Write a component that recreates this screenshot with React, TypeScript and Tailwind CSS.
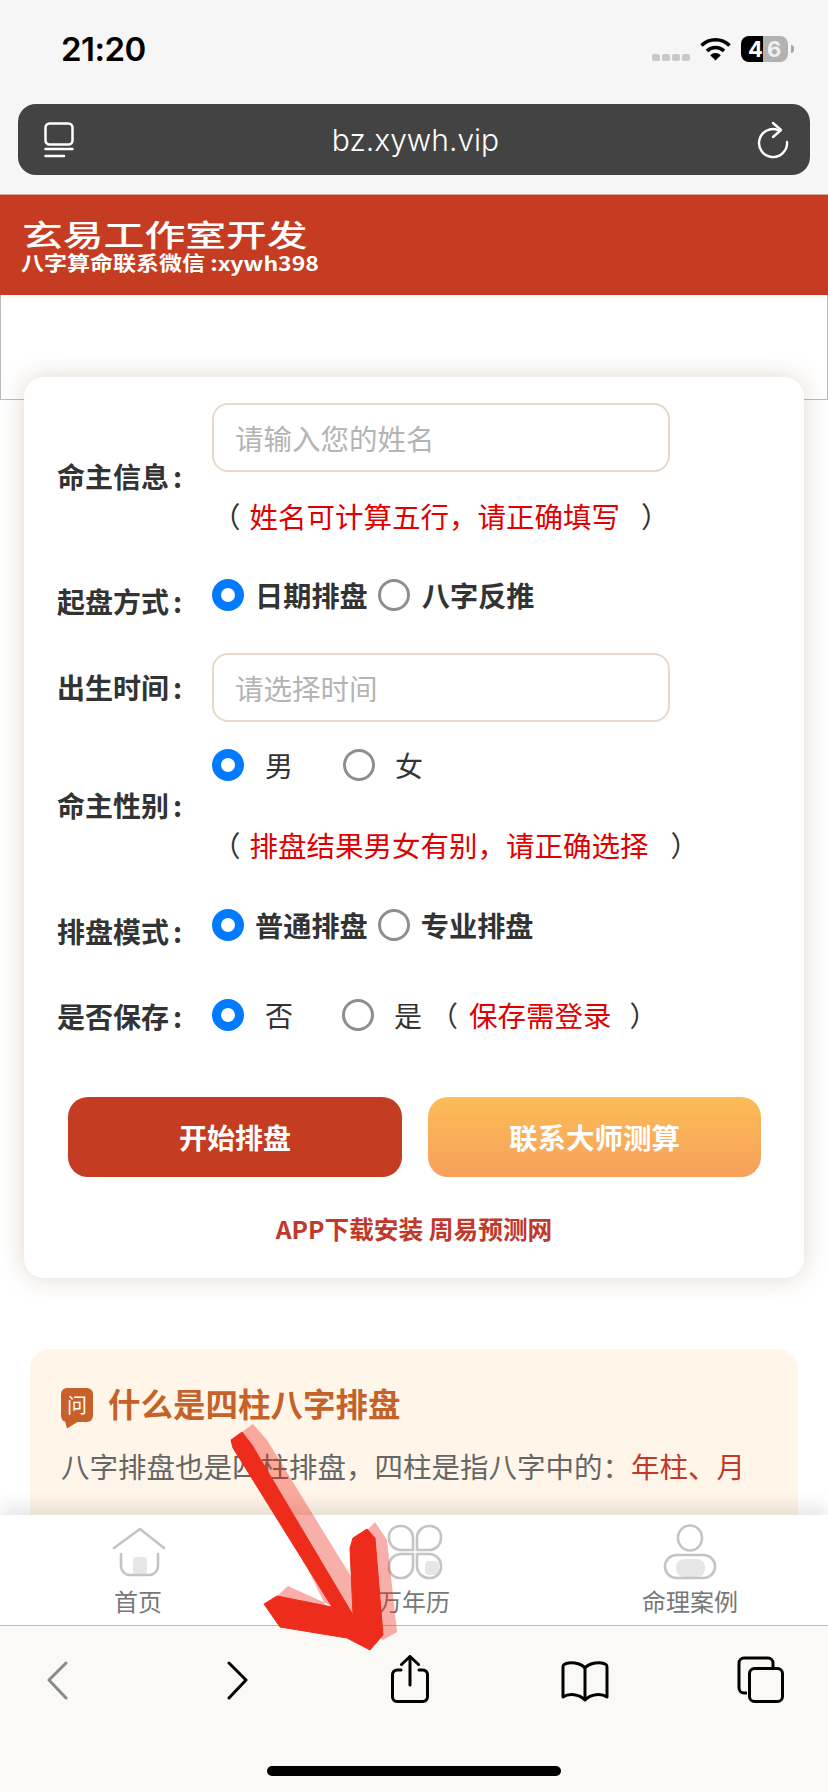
import type { ReactNode } from 'react';

const OPEN = '\uFF08';
const CLOSE = '\uFF09';
const COMMA = '\uFF0C';
const COLON = '\uFF1A';

function Radio({ checked = false }: { checked?: boolean }) {
    return checked ? (
        <span className="block w-[32px] h-[32px] shrink-0 rounded-full border-[9px] border-[#007aff] bg-white" />
    ) : (
        <span className="block w-[32px] h-[32px] shrink-0 rounded-full border-[3px] border-[#8e8e8e] bg-white" />
    );
}

function Label({ children }: { children: ReactNode }) {
    return (
        <div className="w-[155px] shrink-0 -mt-[2px] text-[28px] leading-[36px] font-bold text-[#333] whitespace-nowrap">
            {children}
            <span className="ml-[4px]">:</span>
        </div>
    );
}

function Note({ text, gap }: { text: string; gap: string }) {
    return (
        <div className="flex text-[28.5px] leading-[36px] text-[#333]">
            <span>{OPEN}</span>
            <span className="ml-[9px] text-[#e00000]">{text}</span>
            <span className={gap}>{CLOSE}</span>
        </div>
    );
}

function TextInput({ placeholder }: { placeholder: string }) {
    return (
        <input
            readOnly
            placeholder={placeholder}
            className="block w-[458px] h-[69px] px-[21px] rounded-[16px] border-2 border-[#e8d8c8] bg-white text-[28.5px] outline-none placeholder:text-[#b4b4b4]"
        />
    );
}

export default function App() {
    return (
        <div className="relative flex flex-col w-[828px] h-[1792px] overflow-hidden bg-white font-['Noto_Sans_CJK_SC','Noto_Sans',sans-serif]">
            {/* Status bar and address bar */}
            <div className="shrink-0 h-[195px] bg-[#f6f6f6] border-b border-[#d8a89c]">
                <div className="flex justify-between h-[104px] pl-[61px] pr-[34px] pt-[29px]">
                    <div className="font-['Inter',sans-serif] text-[33px] leading-[40px] font-semibold text-black tracking-[-0.5px]">21:20</div>
                    <div className="flex items-start pt-[7px]">
                        <div className="flex gap-[2px] mt-[18px]">
                            <span className="w-[8px] h-[7px] rounded-[2px] bg-[#c9c9c9]" />
                            <span className="w-[8px] h-[7px] rounded-[2px] bg-[#c9c9c9]" />
                            <span className="w-[8px] h-[7px] rounded-[2px] bg-[#c9c9c9]" />
                            <span className="w-[8px] h-[7px] rounded-[2px] bg-[#c9c9c9]" />
                        </div>
                        <svg className="ml-[10px] mt-[1px]" width="31" height="24" viewBox="0 0 31 24" fill="none" stroke="#000" strokeWidth="3.6">
                            <path d="M1.5 8.5A20 20 0 0 1 29.5 8.5" />
                            <path d="M7 14A12 12 0 0 1 24 14" />
                            <path d="M15.5 23.5L10.2 18.2A7.5 7.5 0 0 1 20.8 18.2Z" fill="#000" stroke="none" />
                        </svg>
                        <div className="flex ml-[10px] w-[47px] h-[26px] font-['Inter',sans-serif] text-[22px] leading-[26px] font-bold">
                            <span className="w-[22px] rounded-l-[8px] bg-black text-white text-right">4</span>
                            <span className="w-[25px] pl-[4px] rounded-r-[8px] bg-[#b2b2b2] text-[#f0f0f0]">6</span>
                        </div>
                        <span className="ml-[3px] mt-[9px] w-[3px] h-[8px] rounded-r-[3px] bg-[#a8a8a8]" />
                    </div>
                </div>
                <div className="flex items-center justify-between mx-[18px] h-[71px] pl-[26px] pr-[19px] rounded-[18px] bg-[#434343]">
                    <svg width="30" height="36" viewBox="0 0 30 36" fill="none" stroke="#fff" strokeWidth="2.5" strokeLinecap="round">
                        <rect x="1.5" y="1.5" width="27" height="21" rx="4" />
                        <path d="M1.5 27H28.5" />
                        <path d="M1.5 34H20" />
                    </svg>
                    <div className="font-['Inter',sans-serif] text-[30px] leading-[40px] text-white font-light">bz.xywh.vip</div>
                    <svg width="34" height="40" viewBox="0 0 34 40" fill="none" stroke="#fff" strokeWidth="2.4" strokeLinecap="round" strokeLinejoin="round">
                        <path d="M21 10A14 14 0 1 0 30 22" />
                        <path d="M16 3L24 10L16 17" />
                    </svg>
                </div>
            </div>

            {/* Page content */}
            <div className="flex-1 min-h-0 overflow-hidden">
                <div className="flex flex-col justify-center h-[100px] pl-[22px] bg-[#c53c22] text-white">
                    <div className="origin-left scale-x-[1.36] text-[30px] leading-[30px] font-medium whitespace-nowrap">玄易工作室开发</div>
                    <div className="origin-left scale-x-[1.15] mt-[5px] -ml-[1px] text-[20px] leading-[20px] font-bold whitespace-nowrap">八字算命联系微信 :xywh398</div>
                </div>
                <div className="h-[105px] border border-t-0 border-[#bbb] shadow-[inset_0_8px_12px_-8px_rgba(0,0,0,0.06)]" />

                {/* Form card */}
                <div className="relative mx-[24px] -mt-[23px] pt-[26px] pb-[32px] pl-[33px] rounded-[20px] bg-white shadow-[0_0_24px_rgba(150,110,80,0.28)]">
                    <div className="flex items-center h-[148px]">
                        <Label>命主信息</Label>
                        <div className="self-start">
                            <TextInput placeholder="请输入您的姓名" />
                            <div className="mt-[26px]">
                                <Note text={`姓名可计算五行${COMMA}请正确填写`} gap="ml-[21px]" />
                            </div>
                        </div>
                    </div>

                    <div className="flex items-center h-[46px] mt-[28px]">
                        <Label>起盘方式</Label>
                        <div className="self-start flex items-center text-[28.2px] leading-[32px] font-bold text-[#333]">
                            <Radio checked />
                            <span className="ml-[11px]">日期排盘</span>
                            <span className="ml-[10px]"><Radio /></span>
                            <span className="ml-[12px]">八字反推</span>
                        </div>
                    </div>

                    <div className="flex items-center h-[69px] mt-[28px]">
                        <Label>出生时间</Label>
                        <TextInput placeholder="请选择时间" />
                    </div>

                    <div className="flex items-center h-[114px] mt-[27px]">
                        <Label>命主性别</Label>
                        <div className="self-start">
                            <div className="flex items-center text-[28px] leading-[32px] text-[#333]">
                                <Radio checked />
                                <span className="ml-[21px]">男</span>
                                <span className="ml-[50px]"><Radio /></span>
                                <span className="ml-[20px]">女</span>
                            </div>
                            <div className="mt-[46px]">
                                <Note text={`排盘结果男女有别${COMMA}请正确选择`} gap="ml-[22px]" />
                            </div>
                        </div>
                    </div>

                    <div className="flex items-center h-[46px] mt-[46px]">
                        <Label>排盘模式</Label>
                        <div className="self-start flex items-center text-[28.2px] leading-[32px] font-bold text-[#333]">
                            <Radio checked />
                            <span className="ml-[11px]">普通排盘</span>
                            <span className="ml-[10px]"><Radio /></span>
                            <span className="ml-[11px]">专业排盘</span>
                        </div>
                    </div>

                    <div className="flex items-center h-[36px] mt-[44px]">
                        <Label>是否保存</Label>
                        <div className="self-start flex items-center text-[28px] leading-[32px] text-[#333]">
                            <Radio checked />
                            <span className="ml-[21px]">否</span>
                            <span className="ml-[49px]"><Radio /></span>
                            <span className="ml-[20px]">是</span>
                            <span className="ml-[8px]">{OPEN}</span>
                            <span className="ml-[11px] text-[28.5px] text-[#e00000]">保存需登录</span>
                            <span className="ml-[18px]">{CLOSE}</span>
                        </div>
                    </div>

                    <div className="flex gap-[26px] mt-[62px] ml-[11px]">
                        <div className="flex items-center justify-center w-[334px] h-[80px] rounded-[20px] bg-[#c43c22] text-[28px] font-bold text-white">开始排盘</div>
                        <div className="flex items-center justify-center w-[333px] h-[80px] rounded-[20px] bg-gradient-to-b from-[#fcbc56] to-[#f7a05b] text-[28.5px] font-bold text-white">联系大师测算</div>
                    </div>

                    <div className="-ml-[33px] mt-[33px] text-center text-[24.7px] leading-[36px] font-bold text-[#c0392b]">APP下载安装 周易预测网</div>
                </div>

                {/* Explanation card */}
                <div className="mt-[71px] mx-[30px] pt-[39px] pb-[60px] pl-[31px] rounded-[20px] bg-[#fff6e9]">
                    <div className="flex items-start">
                        <div className="relative flex items-center justify-center w-[32px] h-[34px] rounded-[6px] bg-[#c8602a] text-[20px] leading-none text-white">
                            问
                            <svg className="absolute left-[4px] top-[33px]" width="14" height="8" viewBox="0 0 14 8" fill="#c8602a">
                                <path d="M0 0H14L2 7.5Z" />
                            </svg>
                        </div>
                        <div className="ml-[15px] -mt-[3px] text-[32.5px] leading-[36px] font-bold text-[#c4622a]">什么是四柱八字排盘</div>
                    </div>
                    <p className="mt-[24px] text-[28.5px] leading-[40px] whitespace-nowrap text-[#666]">
                        {`八字排盘也是四柱排盘${COMMA}四柱是指八字中的${COLON}`}<span className="text-[#c0392b]">年柱、月</span>
                    </p>
                </div>
            </div>

            {/* Site tab bar */}
            <div className="relative shrink-0 grid grid-cols-3 h-[110px] bg-white shadow-[0_-8px_18px_rgba(0,0,0,0.1)]">
                <div className="flex flex-col items-center">
                    <svg className="mt-[11px]" width="58" height="54" viewBox="0 0 58 54" fill="none" stroke="#c4c4c4" strokeWidth="2.6" strokeLinecap="round" strokeLinejoin="round">
                        <rect x="24" y="31" width="14" height="18" rx="4" fill="#e6e6e6" stroke="none" />
                        <path d="M5 22L31 3L55 22" />
                        <path d="M12 28V40A9 9 0 0 0 21 49H40A9 9 0 0 0 49 40V28" />
                    </svg>
                    <span className="mt-[6px] text-[24px] leading-[30px] text-[#777]">首页</span>
                </div>
                <div className="flex flex-col items-center">
                    <svg className="mt-[9px]" width="58" height="56" viewBox="0 0 58 56" fill="none" stroke="#c4c4c4" strokeWidth="2.6">
                        <rect x="40" y="37" width="14" height="14" rx="4" fill="#e6e6e6" stroke="none" />
                        <path d="M28 26H16A12 12 0 0 1 4 14A11 11 0 0 1 16 2A12 12 0 0 1 28 14Z" />
                        <path d="M32 26H44A12 12 0 0 0 56 14A11 11 0 0 0 44 2A12 12 0 0 0 32 14Z" />
                        <path d="M28 30H16A12 12 0 0 0 4 42A11 11 0 0 0 16 54A12 12 0 0 0 28 42Z" />
                        <path d="M32 30H44A12 12 0 0 1 56 42A11 11 0 0 1 44 54A12 12 0 0 1 32 42Z" />
                    </svg>
                    <span className="mt-[6px] text-[24px] leading-[30px] text-[#777]">万年历</span>
                </div>
                <div className="flex flex-col items-center">
                    <svg className="mt-[9px]" width="56" height="56" viewBox="0 0 56 56" fill="none" stroke="#c4c4c4" strokeWidth="2.6">
                        <rect x="14" y="35" width="29" height="18" rx="8" fill="#e6e6e6" stroke="none" />
                        <ellipse cx="28" cy="14" rx="12" ry="12.5" />
                        <rect x="3" y="31" width="50" height="23" rx="11.5" />
                    </svg>
                    <span className="mt-[6px] text-[24px] leading-[30px] text-[#777]">命理案例</span>
                </div>
            </div>

            {/* Browser toolbar */}
            <div className="relative shrink-0 h-[167px] bg-[#fbf9f6] border-t border-[#bdbdbd]">
                <div className="flex pt-[29px] h-[124px]">
                    <svg className="ml-[47px]" width="21" height="48" viewBox="0 0 21 48" fill="none" stroke="#8a8a8a" strokeWidth="3" strokeLinecap="round" strokeLinejoin="round">
                        <path d="M19 8L2 25L19 43" />
                    </svg>
                    <svg className="ml-[159px]" width="21" height="48" viewBox="0 0 21 48" fill="none" stroke="#000" strokeWidth="3" strokeLinecap="round" strokeLinejoin="round">
                        <path d="M2 8L19 25L2 43" />
                    </svg>
                    <svg className="ml-[143px]" width="38" height="48" viewBox="0 0 38 48" fill="none" stroke="#000" strokeWidth="3" strokeLinecap="round" strokeLinejoin="round">
                        <path d="M10 15H6A4.5 4.5 0 0 0 1.5 19.5V42A4.5 4.5 0 0 0 6 46.5H32A4.5 4.5 0 0 0 36.5 42V19.5A4.5 4.5 0 0 0 32 15H28" />
                        <path d="M19 30V2" />
                        <path d="M10.5 9.5L19 1.5L27.5 9.5" />
                    </svg>
                    <svg className="ml-[132px]" width="48" height="48" viewBox="0 0 48 48" fill="none" stroke="#000" strokeWidth="3" strokeLinecap="round" strokeLinejoin="round">
                        <path d="M24 13C20 8 8 6 3 9.5Q2 10 2 13V42C8 38 18 39 24 45C30 39 40 38 46 42V13Q46 10 45 9.5C40 6 28 8 24 13Z" />
                        <path d="M24 13V44" />
                    </svg>
                    <svg className="ml-[128px]" width="48" height="48" viewBox="0 0 48 48" fill="none" stroke="#000" strokeWidth="3" strokeLinejoin="round">
                        <path d="M10 38H7A5 5 0 0 1 2 33V8A5 5 0 0 1 7 3H31A5 5 0 0 1 36 8V12" />
                        <rect x="12.5" y="13.5" width="33" height="33" rx="5" />
                    </svg>
                </div>
                <div className="mx-auto mt-[16px] w-[294px] h-[10px] rounded-full bg-black" />
            </div>

            {/* Red arrow drawn over the page */}
            <svg className="absolute left-0 top-0 pointer-events-none" width="828" height="1792" viewBox="0 0 828 1792">
                <path
                    d="M242 1432L253 1424L267 1440L352 1578L350 1548L375 1522L387 1540L397 1632L383 1640L353 1615L332 1606L288 1586L277 1596L330 1615Z"
                    fill="#ee2c1c"
                    fillOpacity="0.38"
                />
                <path
                    d="M231 1440L242 1432L252 1445L353 1615L350 1548L353 1538L367 1529L375 1538L383 1635L370 1650L347 1638L280 1627L264 1604L277 1596L332 1607L233 1448Z"
                    fill="#ee2c1c"
                    stroke="#ee2c1c"
                    strokeLinejoin="round"
                />
            </svg>
        </div>
    );
}
